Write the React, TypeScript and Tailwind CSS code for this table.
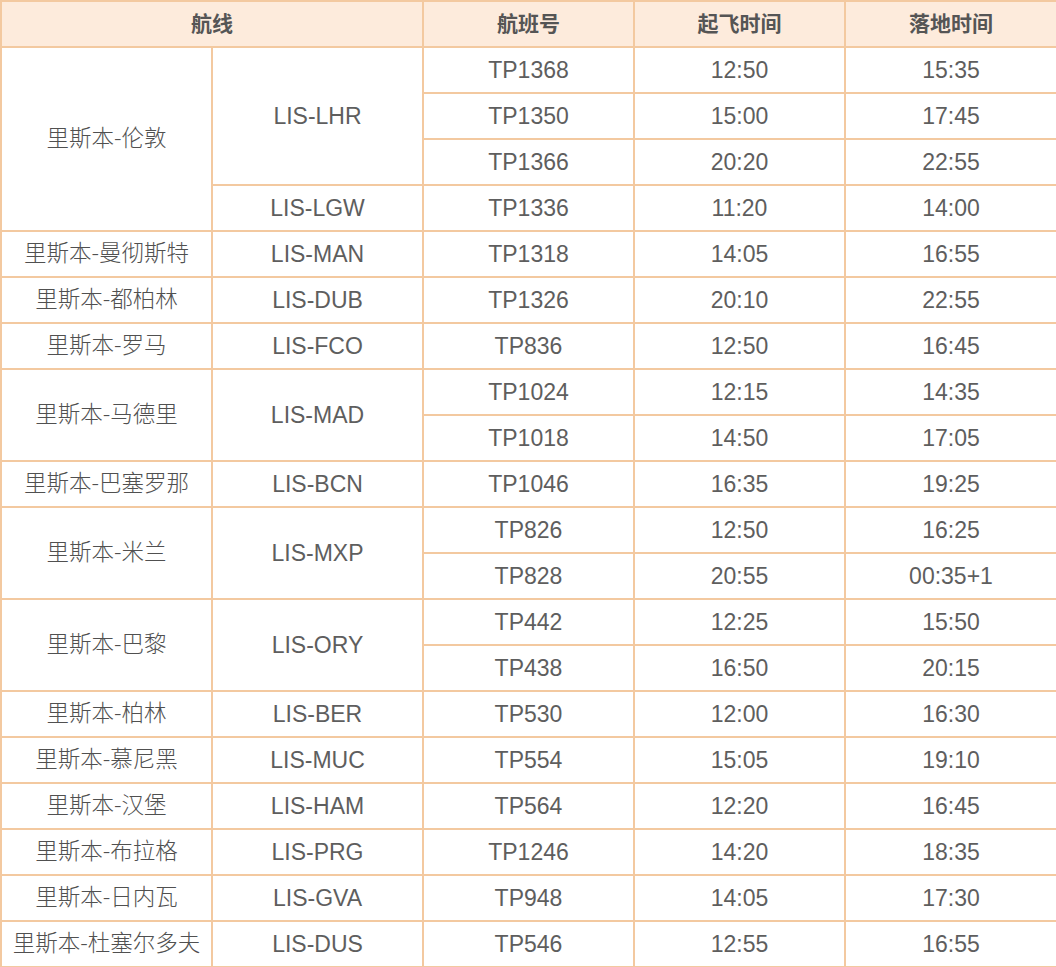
import React from 'react';

type Row = {
  city?: string;
  citySpan?: number;
  code?: string;
  codeSpan?: number;
  flight: string;
  dep: string;
  arr: string;
};

const rows: Row[] = [
  { city: '里斯本-伦敦', citySpan: 4, code: 'LIS-LHR', codeSpan: 3, flight: 'TP1368', dep: '12:50', arr: '15:35' },
  { flight: 'TP1350', dep: '15:00', arr: '17:45' },
  { flight: 'TP1366', dep: '20:20', arr: '22:55' },
  { code: 'LIS-LGW', flight: 'TP1336', dep: '11:20', arr: '14:00' },
  { city: '里斯本-曼彻斯特', code: 'LIS-MAN', flight: 'TP1318', dep: '14:05', arr: '16:55' },
  { city: '里斯本-都柏林', code: 'LIS-DUB', flight: 'TP1326', dep: '20:10', arr: '22:55' },
  { city: '里斯本-罗马', code: 'LIS-FCO', flight: 'TP836', dep: '12:50', arr: '16:45' },
  { city: '里斯本-马德里', citySpan: 2, code: 'LIS-MAD', codeSpan: 2, flight: 'TP1024', dep: '12:15', arr: '14:35' },
  { flight: 'TP1018', dep: '14:50', arr: '17:05' },
  { city: '里斯本-巴塞罗那', code: 'LIS-BCN', flight: 'TP1046', dep: '16:35', arr: '19:25' },
  { city: '里斯本-米兰', citySpan: 2, code: 'LIS-MXP', codeSpan: 2, flight: 'TP826', dep: '12:50', arr: '16:25' },
  { flight: 'TP828', dep: '20:55', arr: '00:35+1' },
  { city: '里斯本-巴黎', citySpan: 2, code: 'LIS-ORY', codeSpan: 2, flight: 'TP442', dep: '12:25', arr: '15:50' },
  { flight: 'TP438', dep: '16:50', arr: '20:15' },
  { city: '里斯本-柏林', code: 'LIS-BER', flight: 'TP530', dep: '12:00', arr: '16:30' },
  { city: '里斯本-慕尼黑', code: 'LIS-MUC', flight: 'TP554', dep: '15:05', arr: '19:10' },
  { city: '里斯本-汉堡', code: 'LIS-HAM', flight: 'TP564', dep: '12:20', arr: '16:45' },
  { city: '里斯本-布拉格', code: 'LIS-PRG', flight: 'TP1246', dep: '14:20', arr: '18:35' },
  { city: '里斯本-日内瓦', code: 'LIS-GVA', flight: 'TP948', dep: '14:05', arr: '17:30' },
  { city: '里斯本-杜塞尔多夫', code: 'LIS-DUS', flight: 'TP546', dep: '12:55', arr: '16:55' },
];

const cell = 'border-2 border-[#f3c9a0] h-[46px] p-0 text-center align-middle';
const th = 'border-2 border-[#f3c9a0] h-[46px] p-0 pb-[2px] text-center align-middle bg-[#fdebdc] font-bold text-[21px] text-[#555]';

const App: React.FC = () => {
  return (
    <div className="w-[1056px] bg-white font-['Liberation_Sans','Noto_Sans_CJK_SC',sans-serif]">
      <table className="w-[1056px] table-fixed border-collapse text-[23px] text-[#5e5e5e]">
        <colgroup>
          <col className="w-[211px]" />
          <col className="w-[211px]" />
          <col className="w-[211px]" />
          <col className="w-[211px]" />
          <col className="w-[212px]" />
        </colgroup>
        <thead>
          <tr>
            <th colSpan={2} className={`${th} font-['Noto_Sans_CJK_SC',sans-serif]`}>航线</th>
            <th className={`${th} font-['Noto_Sans_CJK_SC',sans-serif]`}>航班号</th>
            <th className={`${th} font-['Noto_Sans_CJK_SC',sans-serif]`}>起飞时间</th>
            <th className={`${th} font-['Noto_Sans_CJK_SC',sans-serif]`}>落地时间</th>
          </tr>
        </thead>
        <tbody>
          {rows.map((r, i) => (
            <tr key={i}>
              {r.city && (
                <td
                  rowSpan={r.citySpan ?? 1}
                  className={`${cell} pb-[4px] whitespace-nowrap font-['Noto_Sans_CJK_SC',sans-serif] font-light text-[22.5px] text-[#505050]`}
                >
                  {r.city}
                </td>
              )}
              {r.code && (
                <td rowSpan={r.codeSpan ?? 1} className={cell}>
                  {r.code}
                </td>
              )}
              <td className={cell}>{r.flight}</td>
              <td className={cell}>{r.dep}</td>
              <td className={cell}>{r.arr}</td>
            </tr>
          ))}
        </tbody>
      </table>
    </div>
  );
};

export default App;
